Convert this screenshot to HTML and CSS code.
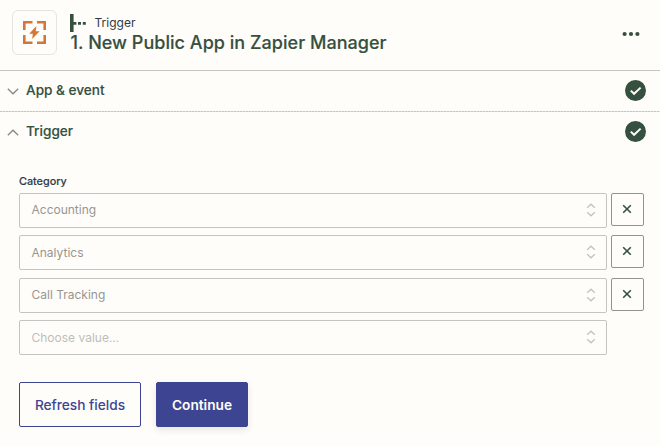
FILE: index.html
```html
<!DOCTYPE html>
<html lang="en">
<head>
<meta charset="utf-8">
<title>Trigger setup</title>
<link rel="stylesheet" href="styles.css">
</head>
<body>
<svg class="defs" aria-hidden="true">
  <symbol id="check" viewBox="0 0 21 21"><circle cx="10.5" cy="10.5" r="10.5" fill="#35503f"/><path d="M5.8 10.6 9.1 13.8 15.6 7.6" fill="none" stroke="#fffdf9" stroke-width="2"/></symbol>
  <symbol id="sort" viewBox="0 0 10 14"><path d="M1.2 4.8 5 1.2 8.8 4.8M1.2 9.2 5 12.8 8.8 9.2" fill="none" stroke="#c2c1be" stroke-width="1.2"/></symbol>
  <symbol id="cross" viewBox="0 0 10 10"><path d="M1.2 1.2 8.8 8.8M8.8 1.2 1.2 8.8" fill="none" stroke="#35503f" stroke-width="1.6"/></symbol>
</svg>
<header class="step-header">
  <div class="app-icon">
    <svg width="23" height="23" viewBox="0 0 23 23" fill="none" stroke="#d27738" stroke-width="2.6"><path d="M1.3 9V1.3H9.5M14 1.3h7.7V9M21.7 14v7.7H14M9.5 21.7H1.3V14"/><path d="M13.4 5 6.2 12.8h3.6L9.2 18l7.4-7.8h-3.9z" fill="#d27738" stroke="none"/></svg>
  </div>
  <div class="heading">
    <div class="kind">
      <svg width="17" height="18" viewBox="0 0 17 18" fill="#35503f"><path d="M0 0h3.6v18H0zM3 8h3.4v2.8H3zM8 8h3v2.8H8zM12.8 8h3v2.8h-3z"/></svg>
      <span>Trigger</span>
    </div>
    <h1>1. New Public App in Zapier Manager</h1>
  </div>
  <svg class="more" width="18" height="6" viewBox="0 0 18 6" fill="#35503f"><circle cx="2.6" cy="3" r="2.1"/><circle cx="9" cy="3" r="2.1"/><circle cx="15.4" cy="3" r="2.1"/></svg>
</header>
<section class="row closed">
  <svg class="chevron" width="12" height="7" viewBox="0 0 12 7"><path d="M.8 .8 6 5.8 11.2 .8"/></svg>
  <h2>App &amp; event</h2>
  <svg width="21" height="21"><use href="#check"/></svg>
</section>
<section class="row open">
  <svg class="chevron" width="12" height="7" viewBox="0 0 12 7"><path d="M.8 6.2 6 1.2 11.2 6.2"/></svg>
  <h2>Trigger</h2>
  <svg width="21" height="21"><use href="#check"/></svg>
</section>
<main>
  <div class="label">Category</div>
  <div class="fields">
    <div class="field"><div class="select"><span>Accounting</span><svg width="10" height="14"><use href="#sort"/></svg></div><button class="remove"><svg width="10" height="10"><use href="#cross"/></svg></button></div>
    <div class="field"><div class="select"><span>Analytics</span><svg width="10" height="14"><use href="#sort"/></svg></div><button class="remove"><svg width="10" height="10"><use href="#cross"/></svg></button></div>
    <div class="field"><div class="select"><span>Call Tracking</span><svg width="10" height="14"><use href="#sort"/></svg></div><button class="remove"><svg width="10" height="10"><use href="#cross"/></svg></button></div>
    <div class="field"><div class="select placeholder"><span>Choose value...</span><svg width="10" height="14"><use href="#sort"/></svg></div></div>
  </div>
  <div class="actions"><button class="btn refresh">Refresh fields</button><button class="btn continue">Continue</button></div>
</main>
</body>
</html>
```
FILE: styles.css
```css
* { box-sizing: border-box; }
body { margin: 0; height: 446px; overflow: hidden; background: #fffdf9; color: #35503f; font-family: Inter, "Liberation Sans", sans-serif; }
svg { display: block; flex: none; }
.defs { position: absolute; width: 0; height: 0; }
h1, h2 { margin: 0; white-space: nowrap; }
.step-header { display: flex; height: 71px; padding: 10px 20px 0 12px; border-bottom: 1px solid #c6c5c2; }
.app-icon { width: 45px; height: 45px; border: 1px solid #e4e6e1; border-radius: 6px; display: grid; place-items: center; }
.heading { flex: 1; padding: 4px 0 0 13px; }
.kind { display: flex; align-items: center; gap: 7.5px; height: 18px; font-size: 12px; color: #2d3c45; }
.kind span { line-height: 16px; margin-top: -1px; }
h1 { margin-left: .5px; font-size: 18px; font-weight: 500; line-height: 22px; letter-spacing: .03px; -webkit-text-stroke: .15px; }
.more { margin-top: 21px; }
.row { display: flex; align-items: center; height: 40px; padding: 0 14px 0 7px; }
.open { padding-bottom: 1px; }
.closed { height: 41px; padding-bottom: 2px; background: repeating-linear-gradient(90deg, #c6c5c2 0 2px, #e2e1dd 2px 3px) bottom / 100% 1px no-repeat; }
.chevron { margin-top: 1px; }
.chevron path { fill: none; stroke: #858983; stroke-width: 1.25; }
h2 { flex: 1; margin-left: 7px; font-size: 13.6px; line-height: 19px; font-weight: 500; -webkit-text-stroke: .15px; }
main { padding: 23px 16px 0 19px; }
.label { height: 18px; font-size: 10.8px; line-height: 14px; font-weight: 500; color: #2d3c45; -webkit-text-stroke: .15px; }
.fields { display: grid; gap: 7.4px; }
.field { display: flex; gap: 4px; height: 35px; }
.select { width: 588px; height: 35px; border: 1px solid #c5c4c1; border-radius: 2px; padding: 0 10px 0 11.5px; display: flex; align-items: center; justify-content: space-between; font-size: 12px; line-height: 16px; color: #969692; }
.select span { padding-bottom: .2px; }
.select svg { margin-bottom: 1px; }
.placeholder { color: #bebdb9; }
.remove { width: 33px; height: 33px; padding: 0 1px 1px 0; border: 1px solid #92928f; border-radius: 2px; background: transparent; display: grid; place-items: center; }
.actions { display: flex; gap: 15px; margin-top: 26.8px; }
.btn { height: 45px; padding: 1px 0 0; border: 1px solid #3d4592; border-radius: 2px; font: 500 13.7px/20px Inter, sans-serif; white-space: nowrap; }
.refresh { width: 122px; background: transparent; color: #3d4592; }
.continue { width: 92px; background: #3d4592; color: #fffdf9; font-weight: 600; box-shadow: 0 3px 6px rgba(60, 60, 60, .12); }
```
